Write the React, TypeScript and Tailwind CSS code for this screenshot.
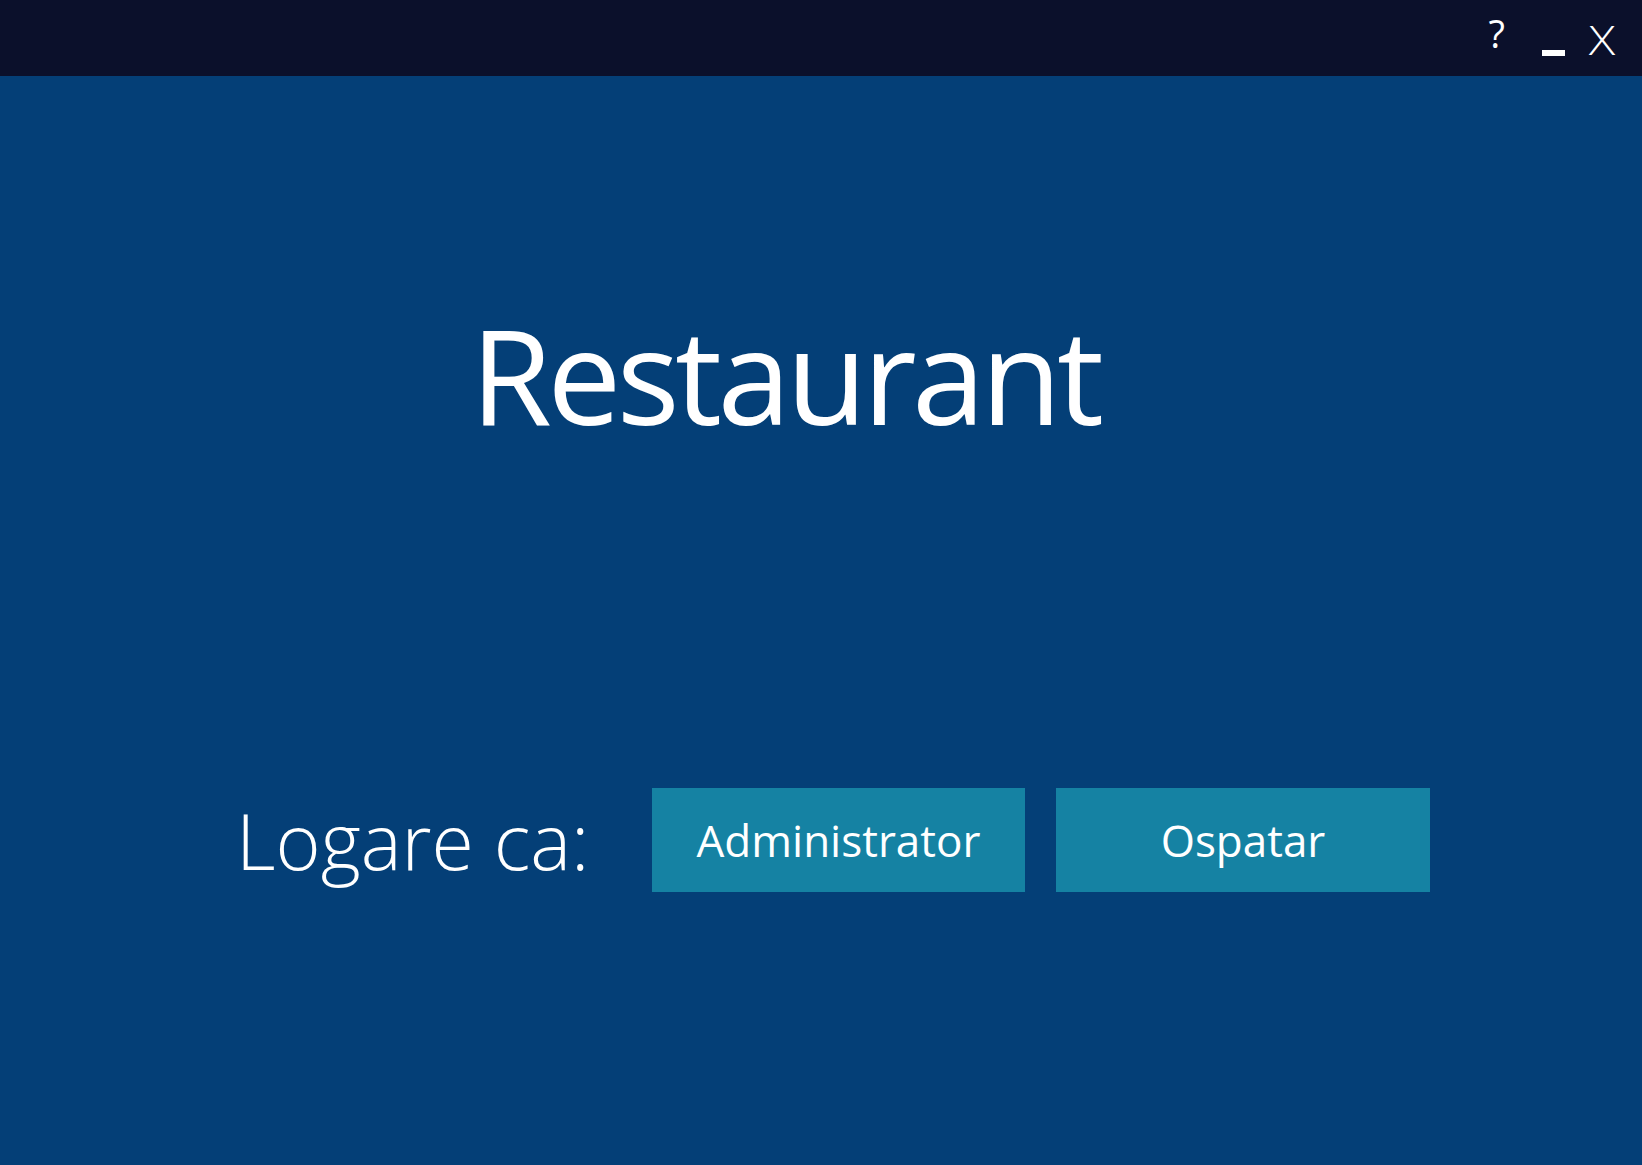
import React from "react";

const TitleBar = () => {
  return (
    <div className="flex h-[76px] w-full items-start justify-end bg-[#0b102b] text-white">
      <span className="mt-[14px] mr-[37px] text-[38px] leading-none font-normal">?</span>
      <span className="mt-[50px] mr-[26px] h-[6px] w-[23px] bg-white"></span>
      <span className="mt-[19px] mr-[29px] inline-block scale-x-120 text-[41px] leading-none font-light">X</span>
    </div>
  );
};

export default function App() {
  return (
    <div
      className="flex h-[1165px] w-[1642px] flex-col bg-[#043f77] text-white"
      style={{ fontFamily: '"Open Sans", "Noto Sans", sans-serif' }}
    >
      <TitleBar />
      <div className="flex flex-col">
        <div className="mt-[232px] flex justify-center pr-[72px]">
          <h1 className="text-[132px] leading-none font-normal tracking-[-4.6px]">Restaurant</h1>
        </div>
        <div className="mt-[348px] flex items-center pl-[236px]">
          <span className="w-[416px] text-[77px] leading-none font-light">Logare ca:</span>
          <div className="flex gap-[31px]">
            <button className="flex h-[104px] w-[373px] items-center justify-center bg-[#1582a3] text-[44px] leading-none font-medium">
              Administrator
            </button>
            <button className="flex h-[104px] w-[374px] items-center justify-center bg-[#1582a3] text-[44px] leading-none font-medium">
              Ospatar
            </button>
          </div>
        </div>
      </div>
    </div>
  );
}
